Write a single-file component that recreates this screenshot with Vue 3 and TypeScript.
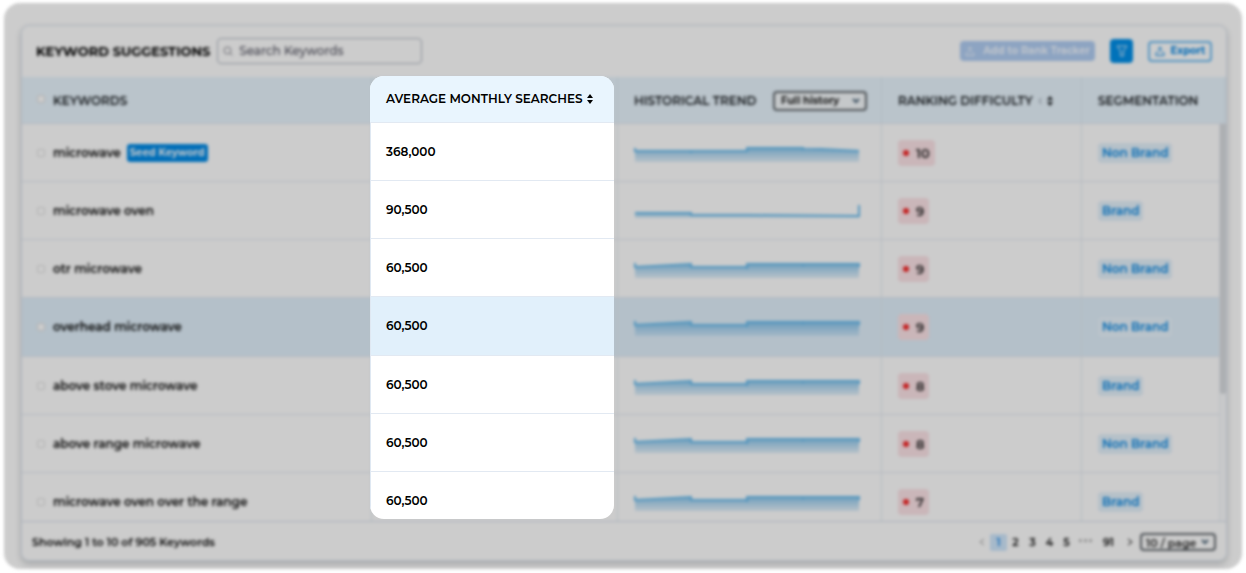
<script setup lang="ts">
import { ref } from 'vue'

type Trend = 'easing' | 'spike' | 'steady'

interface Keyword {
  name: string
  searches: string
  trend: Trend
  difficulty: number
  segment: string
  seed?: boolean
  active?: boolean
}

const keywords: Keyword[] = [
  { name: 'microwave', searches: '368,000', trend: 'easing', difficulty: 10, segment: 'Non Brand', seed: true },
  { name: 'microwave oven', searches: '90,500', trend: 'spike', difficulty: 9, segment: 'Brand' },
  { name: 'otr microwave', searches: '60,500', trend: 'steady', difficulty: 9, segment: 'Non Brand' },
  { name: 'overhead microwave', searches: '60,500', trend: 'steady', difficulty: 9, segment: 'Non Brand', active: true },
  { name: 'above stove microwave', searches: '60,500', trend: 'steady', difficulty: 8, segment: 'Brand' },
  { name: 'above range microwave', searches: '60,500', trend: 'steady', difficulty: 8, segment: 'Non Brand' },
  { name: 'microwave oven over the range', searches: '60,500', trend: 'steady', difficulty: 7, segment: 'Brand' },
]

const lines: Record<Trend, string> = {
  easing: 'M1 7V10H57V12V10H113V7H169V9V7L225 10',
  spike: 'M1 14H57V16H113L225 17V6',
  steady: 'M1 6V10L57 7V10H113V12V7H169V9V7H225V10',
}
const areas: Record<Trend, string> = {
  easing: 'M1 10H113V7H169L225 10V21H1Z',
  spike: 'M1 14H57V16L225 17V19H1Z',
  steady: 'M1 10L57 7V10H113V7H225V21H1Z',
}

const search = ref('')
const history = ref('Full history')
const pageSize = ref('10 / page')
const pages = [1, 2, 3, 4, 5]
</script>

<template>
  <main class="stage">
    <div class="board">
      <section class="card">
        <header class="toolbar">
          <h1>KEYWORD SUGGESTIONS</h1>
          <label class="search">
            <svg width="10" height="10" viewBox="0 0 10 10" aria-hidden="true">
              <circle cx="4.5" cy="4.5" r="3.5" />
              <path d="M7 7l2.5 2.5" />
            </svg>
            <input v-model="search" type="text" placeholder="Search Keywords" aria-label="Search Keywords" />
          </label>
          <div class="actions">
            <button class="track" type="button" disabled>
              <svg width="10" height="10" viewBox="0 0 10 10" aria-hidden="true">
                <path d="M5 6.500V1M3 3l2-2 2 2M3 5.500L1 8v1.500h8V8L7 5.500" />
              </svg>
              Add to Rank Tracker
            </button>
            <button class="filter" type="button" aria-label="Filter">
              <svg width="12" height="12" viewBox="0 0 12 12" aria-hidden="true">
                <path d="M1 1h10L7.500 6v5h-3V6z" />
              </svg>
            </button>
            <button class="export" type="button">
              <svg width="10" height="10" viewBox="0 0 10 10" aria-hidden="true">
                <path d="M5 6.500V1M3 3l2-2 2 2M3 5.500L1 7v2.500h8V7L7 5.500" />
              </svg>
              Export
            </button>
          </div>
        </header>

        <div class="scroller">
          <table class="grid">
            <colgroup>
              <col />
              <col class="c-search" />
              <col class="c-trend" />
              <col class="c-rank" />
              <col class="c-seg" />
            </colgroup>
            <thead>
              <tr>
                <th scope="col">
                  <div class="cell">
                    <input type="checkbox" class="all" aria-label="Select all keywords" />
                    KEYWORDS
                  </div>
                </th>
                <td></td>
                <th scope="col">
                  <div class="cell spread">
                    HISTORICAL TREND
                    <span class="pick">
                      <select v-model="history" aria-label="Trend range">
                        <option>Full history</option>
                      </select>
                      <svg width="8" height="6" viewBox="0 0 8 6" aria-hidden="true"><path d="M1 1l3 3 3-3" /></svg>
                    </span>
                  </div>
                </th>
                <th scope="col">
                  <div class="cell tight">
                    RANKING DIFFICULTY
                    <svg class="hint" width="4" height="8" viewBox="0 0 4 8" aria-hidden="true"><path d="M3 1Q0 4 3 7" /></svg>
                    <svg class="sort" width="6" height="10" viewBox="0 0 6 10" aria-hidden="true">
                      <path d="M0 4l3-4 3 4zM0 6l3 4 3-4z" />
                    </svg>
                  </div>
                </th>
                <th scope="col">SEGMENTATION</th>
              </tr>
            </thead>
            <tbody>
              <tr v-for="k in keywords" :key="k.name" :class="{ active: k.active }">
                <td>
                  <div class="cell">
                    <input type="checkbox" :aria-label="`Select ${k.name}`" />
                    {{ k.name }}
                    <span v-if="k.seed" class="seed">Seed Keyword</span>
                  </div>
                </td>
                <td></td>
                <td>
                  <svg class="spark" width="226" height="24" viewBox="0 0 226 24" aria-hidden="true">
                    <defs>
                      <linearGradient id="trend-fill" x1="0" y1="0" x2="0" y2="1">
                        <stop offset="0" stop-color="#5fb2e6" stop-opacity="0.75" />
                        <stop offset="1" stop-color="#8cc4ec" stop-opacity="0.25" />
                      </linearGradient>
                    </defs>
                    <path class="area" :d="areas[k.trend]" />
                    <path class="line" :d="lines[k.trend]" />
                  </svg>
                </td>
                <td><span class="rank"><i></i>{{ k.difficulty }}</span></td>
                <td><span class="segment">{{ k.segment }}</span></td>
              </tr>
            </tbody>
          </table>
          <div class="scrollbar"><div class="thumb"></div></div>
        </div>

        <footer class="footer">
          <span>Showing 1 to 10 of 905 Keywords</span>
          <nav class="pager" aria-label="Pagination">
            <button type="button" class="arrow off" aria-label="Previous page">
              <svg width="6" height="8" viewBox="0 0 6 8"><path d="M5 1L1 4l4 3" /></svg>
            </button>
            <button v-for="p in pages" :key="p" type="button" :class="{ current: p === 1 }">{{ p }}</button>
            <span class="dots">•••</span>
            <button type="button" class="last">91</button>
            <button type="button" class="arrow" aria-label="Next page">
              <svg width="6" height="8" viewBox="0 0 6 8"><path d="M1 1l4 3-4 3" /></svg>
            </button>
            <span class="pick size">
              <select v-model="pageSize" aria-label="Rows per page">
                <option>10 / page</option>
              </select>
              <svg width="8" height="6" viewBox="0 0 8 6" aria-hidden="true"><path d="M1 1l3 3 3-3" /></svg>
            </span>
          </nav>
        </footer>
      </section>
    </div>

    <section class="spotlight">
      <table>
        <thead>
          <tr>
            <th scope="col">
              <div class="cell tight">
                AVERAGE MONTHLY SEARCHES
                <svg class="sort" width="6" height="10" viewBox="0 0 6 10" aria-hidden="true">
                  <path d="M0 4l3-4 3 4zM0 6l3 4 3-4z" />
                </svg>
              </div>
            </th>
          </tr>
        </thead>
        <tbody>
          <tr v-for="k in keywords" :key="k.name" :class="{ active: k.active }">
            <td>{{ k.searches }}</td>
          </tr>
        </tbody>
      </table>
    </section>
  </main>
</template>

<style>
body {
  margin: 0;
  background: #fff;
}
</style>

<style scoped>
* {
  box-sizing: border-box;
}
.stage {
  position: relative;
  padding: 3px 4px 4px;
  font: 600 12px/16px Montserrat, Inter, "Open Sans", sans-serif;
  color: #000;
}
.board {
  padding: 22px 15px 8px 17px;
  border-radius: 16px;
  background: #fff;
  filter: brightness(0.8) blur(1px) blur(1px);
}
.card {
  border: 1px solid #dbe4ef;
  border-radius: 8px;
  background: #fff;
  box-shadow: 0 3px 6px rgba(30, 40, 50, 0.22);
  overflow: hidden;
}
.toolbar {
  display: flex;
  align-items: center;
  height: 51px;
  padding: 0 14px 1px;
}
h1 {
  margin: 0;
  font-size: 13px;
  line-height: 20px;
  font-weight: 700;
}
.search {
  display: flex;
  align-items: center;
  gap: 6px;
  width: 205px;
  height: 26px;
  margin-left: 7px;
  padding: 0 5px;
  border: 1px solid #b0b8c2;
  border-radius: 4px;
}
.search input {
  flex: 1;
  min-width: 0;
  padding: 0;
  border: 0;
  outline: 0;
  background: none;
  font: inherit;
  font-weight: 500;
}
.search input::placeholder {
  color: #50505e;
  opacity: 1;
}
svg {
  flex: none;
  fill: none;
  stroke: currentColor;
}
.search svg {
  color: #86868f;
}
button {
  font: inherit;
  color: inherit;
  padding: 0;
  border: 0;
  background: none;
}
.actions {
  display: flex;
  align-items: center;
  gap: 15px;
  margin-left: auto;
}
.actions button {
  display: flex;
  align-items: center;
  justify-content: center;
  gap: 6px;
  border-radius: 4px;
  font-size: 10px;
  font-weight: 700;
}
.actions .track {
  width: 135px;
  height: 20px;
  gap: 8px;
  background: #b0cdf2;
  color: #f0f6ff;
}
.filter {
  width: 23px;
  height: 24px;
  background: #008ee8;
  color: #d8edff;
}
.actions .export {
  width: 64px;
  height: 21px;
  border: 2px solid #6abaf2;
  color: #0084e4;
}
.scroller {
  position: relative;
  height: 444px;
  overflow: hidden;
}
table {
  width: 100%;
  border-collapse: separate;
  border-spacing: 0;
  table-layout: fixed;
}
.c-search {
  width: 246px;
}
.c-trend {
  width: 264px;
}
.c-rank {
  width: 200px;
}
.c-seg {
  width: 144px;
}
th,
td {
  padding: 0 16px;
  text-align: left;
  font-weight: inherit;
  border-bottom: 1px solid #e2e9f2;
}
.grid th,
.grid td {
  border-right: 1px solid #e4eaf3;
}
.grid th:first-child,
.grid td:first-child {
  padding-left: 14px;
}
.grid thead th,
.grid thead td {
  height: 47px;
  padding-top: 2px;
  background: #e9f5fe;
  border-right-color: #dfebf6;
}
.grid thead th {
  color: #14181c;
}
tbody td {
  height: 58px;
}
tbody .active td {
  height: 59px;
  background: #e1f0fb;
}
.cell {
  display: flex;
  align-items: center;
  gap: 8px;
}
.tight {
  gap: 5px;
}
.spread {
  justify-content: space-between;
  margin-right: -2px;
}
input[type="checkbox"] {
  appearance: none;
  flex: none;
  width: 8px;
  height: 8px;
  margin: 0 0 0 1px;
  border: 1px solid #dedede;
  border-radius: 2px;
  background: #fff;
}
.cell input[type="checkbox"].all {
  margin-bottom: 5px;
}
.seed {
  margin-left: -2px;
  padding: 0 3px;
  border-radius: 3px;
  background: #008ae6;
  color: #f2f9ff;
  font-size: 10px;
  font-weight: 700;
  line-height: 18px;
}
.pick {
  position: relative;
  display: flex;
  align-items: center;
  width: 94px;
  color: #222;
}
.pick select {
  appearance: none;
  width: 100%;
  height: 20px;
  padding: 0 6px;
  border: 2px solid #60666c;
  border-radius: 4px;
  background: #f6fafd;
  color: inherit;
  font: inherit;
  font-size: 10px;
  font-weight: 700;
}
.pick svg {
  position: absolute;
  right: 7px;
  color: #4c6478;
  stroke-width: 2;
  pointer-events: none;
}
.hint {
  color: #8b96a0;
}
.sort {
  fill: currentColor;
  stroke: none;
}
.spark {
  display: block;
}
.area {
  fill: url(#trend-fill);
  stroke: none;
}
.line {
  stroke: #68bcee;
  stroke-width: 2;
}
.rank {
  display: inline-flex;
  align-items: center;
  gap: 7px;
  height: 26px;
  padding: 0 5px;
  border-radius: 4px;
  background: #fce3e7;
  color: #1c1c1c;
  font-size: 13px;
}
.rank i {
  width: 6px;
  height: 6px;
  border-radius: 50%;
  background: #f42828;
}
.segment {
  display: inline-block;
  padding: 0 4px;
  border-radius: 4px;
  background: #e4f1fb;
  color: #0084e2;
  line-height: 20px;
}
.active .segment {
  background: #e9f4fd;
}
.scrollbar {
  position: absolute;
  top: 47px;
  right: 0;
  bottom: 0;
  width: 7px;
  background: #fafbfc;
  border-left: 1px solid #eaeff5;
}
.thumb {
  height: 68%;
  border-radius: 0 0 3px 3px;
  background: #d8dbdf;
}
.footer {
  display: flex;
  align-items: center;
  justify-content: space-between;
  height: 39px;
  padding: 2px 10px 0;
  border-top: 1px solid #d6dfeb;
  font-size: 11px;
}
.pager {
  display: flex;
  align-items: center;
}
.pager button {
  width: 17px;
  height: 17px;
  border-radius: 2px;
  line-height: 17px;
}
.pager .current {
  background: #cfe7fd;
  color: #1c88e8;
}
.pager .last {
  width: 25px;
}
.pager .dots {
  width: 21px;
  text-align: center;
  font-family: "DejaVu Sans", sans-serif;
  font-size: 8px;
  color: #aaa;
}
.pager .off {
  color: #999;
}
.size {
  width: 76px;
  margin-left: 2px;
}
.size select {
  height: 18px;
  padding: 0 4px;
  background: #fff;
  font-size: 11px;
  font-weight: 600;
}
.spotlight {
  position: absolute;
  top: 76px;
  right: 632px;
  width: 244px;
  height: 443px;
  border-radius: 14px;
  background: #fff;
  overflow: hidden;
}
.spotlight th {
  height: 47px;
  padding-bottom: 1px;
  background: #e9f5fe;
}
.spotlight td {
  border-left: 1px solid #dfe8f2;
  padding-left: 15px;
}
</style>
